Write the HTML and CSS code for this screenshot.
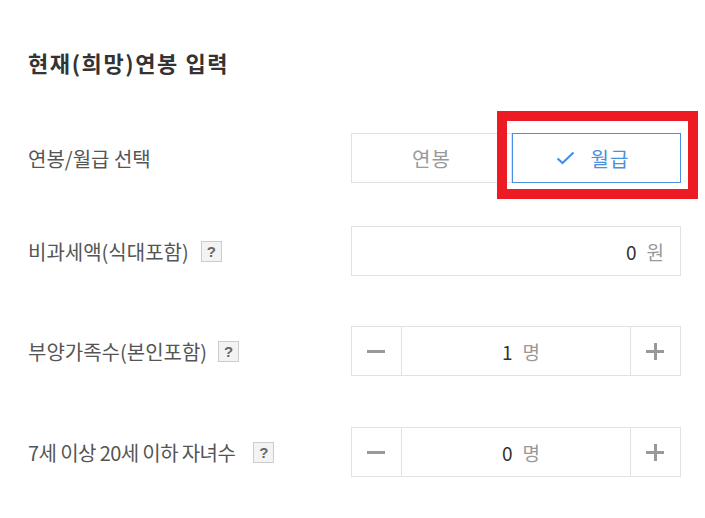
FILE: index.html
```html
<html>
  <head>
    <meta charset="utf-8" />
    <title>연봉 입력</title>
    <link rel="stylesheet" href="styles.css">
  </head>
  <body>
    <div class="salary-form">
      <h2 class="form-title">현재(희망)연봉 입력</h2>

      <div class="row row-type">
        <div class="label">연봉/월급 선택</div>
        <div class="control toggle">
          <button class="toggle-btn">연봉</button>
          <button class="toggle-btn selected">
            <svg class="check" width="19" height="14" viewBox="0 0 19 14"><path d="M1.5 7.5 L6.5 12 L17.5 1.5" fill="none" stroke="#4a90e2" stroke-width="2.2"/></svg>
            월급
          </button>
          <div class="highlight"></div>
        </div>
      </div>

      <div class="row row-tax">
        <div class="label">비과세액(식대포함) <span class="help">?</span></div>
        <div class="control amount">
          <span class="num">0</span><span class="unit">원</span>
        </div>
      </div>

      <div class="row row-family">
        <div class="label">부양가족수(본인포함) <span class="help help-family">?</span></div>
        <div class="control stepper">
          <div class="step minus"><span class="bar-h"></span></div>
          <div class="step-value"><span class="num">1</span><span class="unit">명</span></div>
          <div class="step plus"><span class="bar-h"></span><span class="bar-v"></span></div>
        </div>
      </div>

      <div class="row row-kids">
        <div class="label label-tight">7세 이상 20세 이하 자녀수 <span class="help help-kids">?</span></div>
        <div class="control stepper">
          <div class="step minus"><span class="bar-h"></span></div>
          <div class="step-value"><span class="num">0</span><span class="unit">명</span></div>
          <div class="step plus"><span class="bar-h"></span><span class="bar-v"></span></div>
        </div>
      </div>
    </div>
  </body>
</html>
```

FILE: styles.css
```css
body {
  margin:0;
  background:#fff;
  font-family:'Noto Sans CJK KR', 'Noto Sans', sans-serif;
  color:#555;
}

.salary-form {
  width:653px;
  padding:46px 24px 0 28px;
}

.form-title {
  margin:0;
  font-size:22px;
  line-height:32px;
  font-weight:bold;
  color:#333;
  letter-spacing:1.6px;
}

.row {
  display:flex;
  align-items:center;
  height:50px;
}

.row-type { margin-top:55px; }
.row-tax { margin-top:43px; }
.row-family { margin-top:50px; }
.row-kids { margin-top:51px; }

.label {
  flex:1;
  font-size:20px;
  letter-spacing:0;
  color:#555;
  display:flex;
  align-items:center;
}

.label-tight {
  letter-spacing:-0.6px;
}

.help {
  display:inline-flex;
  align-items:center;
  justify-content:center;
  width:19px;
  height:19px;
  margin-left:12px;
  border:1px solid #ccc;
  background:#f3f3f3;
  color:#666;
  font:bold 15px 'Liberation Sans', sans-serif;
  letter-spacing:0;
}

.help-family {
  margin-left:11px;
}

.help-kids {
  margin-left:18px;
}

.control {
  width:330px;
  height:50px;
  box-sizing:border-box;
}

/* toggle */
.toggle {
  display:flex;
  position:relative;
}

.toggle-btn {
  flex:1;
  height:50px;
  background:#fff;
  border:1px solid #e2e2e2;
  font-family:'Noto Sans CJK KR', sans-serif;
  font-size:20px;
  letter-spacing:1px;
  color:#999;
  display:flex;
  align-items:center;
  justify-content:center;
  padding:0;
}

.toggle-btn.selected {
  border-color:#4a90e2;
  color:#4a90e2;
  padding-right:8px;
}

.check {
  margin-right:16px;
}

.highlight {
  position:absolute;
  left:146px;
  top:-22px;
  width:181px;
  height:68px;
  border:10px solid #ed1c24;
}

/* amount */
.amount {
  border:1px solid #e2e2e2;
  display:flex;
  align-items:center;
  justify-content:flex-end;
  padding-right:16px;
}

.num {
  font-size:19px;
  color:#333;
  margin-right:10px;
}

.unit {
  font-size:19px;
  color:#999;
}

/* stepper */
.stepper {
  display:flex;
  border:1px solid #e2e2e2;
}

.step {
  width:49px;
  position:relative;
}

.minus {
  border-right:1px solid #e2e2e2;
}

.plus {
  border-left:1px solid #e2e2e2;
}

.step-value {
  flex:1;
  display:flex;
  align-items:center;
  justify-content:center;
  padding-left:10px;
}

.bar-h {
  position:absolute;
  left:15px;
  top:23px;
  width:18px;
  height:3px;
  background:#999;
}

.bar-v {
  position:absolute;
  left:23px;
  top:16px;
  width:3px;
  height:17px;
  background:#999;
}
```
